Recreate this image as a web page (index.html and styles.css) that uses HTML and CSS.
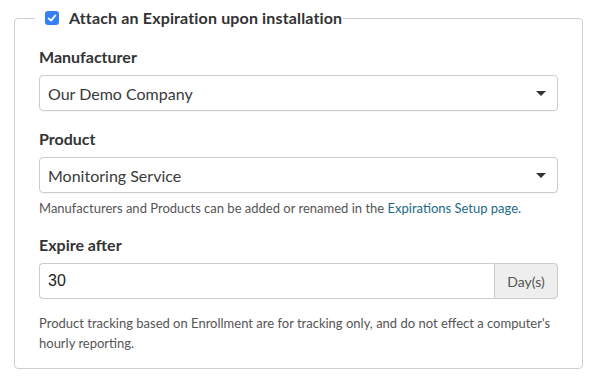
FILE: index.html
```html
<!DOCTYPE html>
<html lang="en">
<head>
<meta charset="utf-8">
<title>Expiration</title>
<link rel="stylesheet" href="styles.css">
</head>
<body>
<fieldset class="panel">
  <legend class="panel-legend">
    <span class="checkbox" role="checkbox" aria-checked="true">
      <svg viewBox="0 0 14 14" width="14" height="14"><path d="M3.6 7.3 L6 9.6 L10.4 4.4" fill="none" stroke="#fff" stroke-width="1.7" stroke-linecap="round" stroke-linejoin="round"/></svg>
    </span>
    <span class="legend-text">Attach an Expiration upon installation</span>
  </legend>

  <div class="field">
    <div class="label">Manufacturer</div>
    <div class="select" role="combobox">
      <span>Our Demo Company</span>
      <svg class="caret" viewBox="0 0 10 5" width="10" height="5"><path d="M0 0 H10 L5 5 Z" fill="#333"/></svg>
    </div>
  </div>

  <div class="field field-gap">
    <div class="label">Product</div>
    <div class="select" role="combobox">
      <span>Monitoring Service</span>
      <svg class="caret" viewBox="0 0 10 5" width="10" height="5"><path d="M0 0 H10 L5 5 Z" fill="#333"/></svg>
    </div>
    <p class="help help-tight">Manufacturers and Products can be added or renamed in the <a href="#" class="link">Expirations Setup page.</a></p>
  </div>

  <div class="field field-gap2">
    <div class="label">Expire after</div>
    <div class="input-group">
      <div class="input">30</div>
      <div class="addon">Day(s)</div>
    </div>
    <p class="help help-loose">Product tracking based on Enrollment are for tracking only, and do not effect a computer's hourly reporting.</p>
  </div>
</fieldset>
</body>
</html>
```

FILE: styles.css
```css
html, body {
  margin: 0;
  padding: 0;
  background: #fff;
}
body {
  font-family: Lato, "Noto Sans", sans-serif;
  color: #333;
}
.panel {
  box-sizing: border-box;
  width: 569px;
  margin: 8px 0 0 14px;
  padding: 19px 24px 15px 24px;
  border: 1px solid #cfcfcf;
  border-radius: 4px;
  min-width: 0;
}
.panel-legend {
  display: flex;
  align-items: center;
  height: 20px;
  margin-left: -4px;
  padding: 0 1px 0 10px;
  font-size: 16px;
  font-weight: 700;
  line-height: 20px;
  letter-spacing: 0.15px;
  color: #333;
}
.checkbox {
  display: flex;
  width: 14px;
  height: 14px;
  border-radius: 3px;
  background: #3580f4;
  margin-right: 10px;
}
.label {
  font-size: 16px;
  font-weight: 700;
  line-height: 20px;
  margin-bottom: 8px;
  color: #333;
}
.field-gap { margin-top: 18px; }
.field-gap2 { margin-top: 17px; }
.select {
  box-sizing: border-box;
  height: 36px;
  display: flex;
  align-items: center;
  justify-content: space-between;
  padding: 0 11px 0 8px;
  border: 1px solid #cccccc;
  border-radius: 4px;
  box-shadow: 0 1px 1px rgba(0,0,0,0.04);
  font-size: 16px;
  color: #3a3a3a;
}
.caret { display: block; margin-top: 1px; }
.help {
  margin: 0;
  font-size: 13px;
  line-height: 20px;
  color: #555;
}
.help-tight { margin-top: 5px; }
.help-loose { margin-top: 14px; }
.link {
  color: #1b6a86;
  text-decoration: none;
}
.input-group {
  display: flex;
  height: 36px;
}
.input {
  box-sizing: border-box;
  flex: 1;
  display: flex;
  align-items: center;
  padding-left: 8px;
  border: 1px solid #cccccc;
  border-right: none;
  border-radius: 4px 0 0 4px;
  font-family: "Liberation Sans", Arial, sans-serif;
  font-size: 16px;
  color: #222;
}
.addon {
  box-sizing: border-box;
  width: 64px;
  display: flex;
  align-items: center;
  justify-content: center;
  border: 1px solid #cccccc;
  border-radius: 0 4px 4px 0;
  background: #eeeeee;
  font-size: 14px;
  color: #555;
}
```
